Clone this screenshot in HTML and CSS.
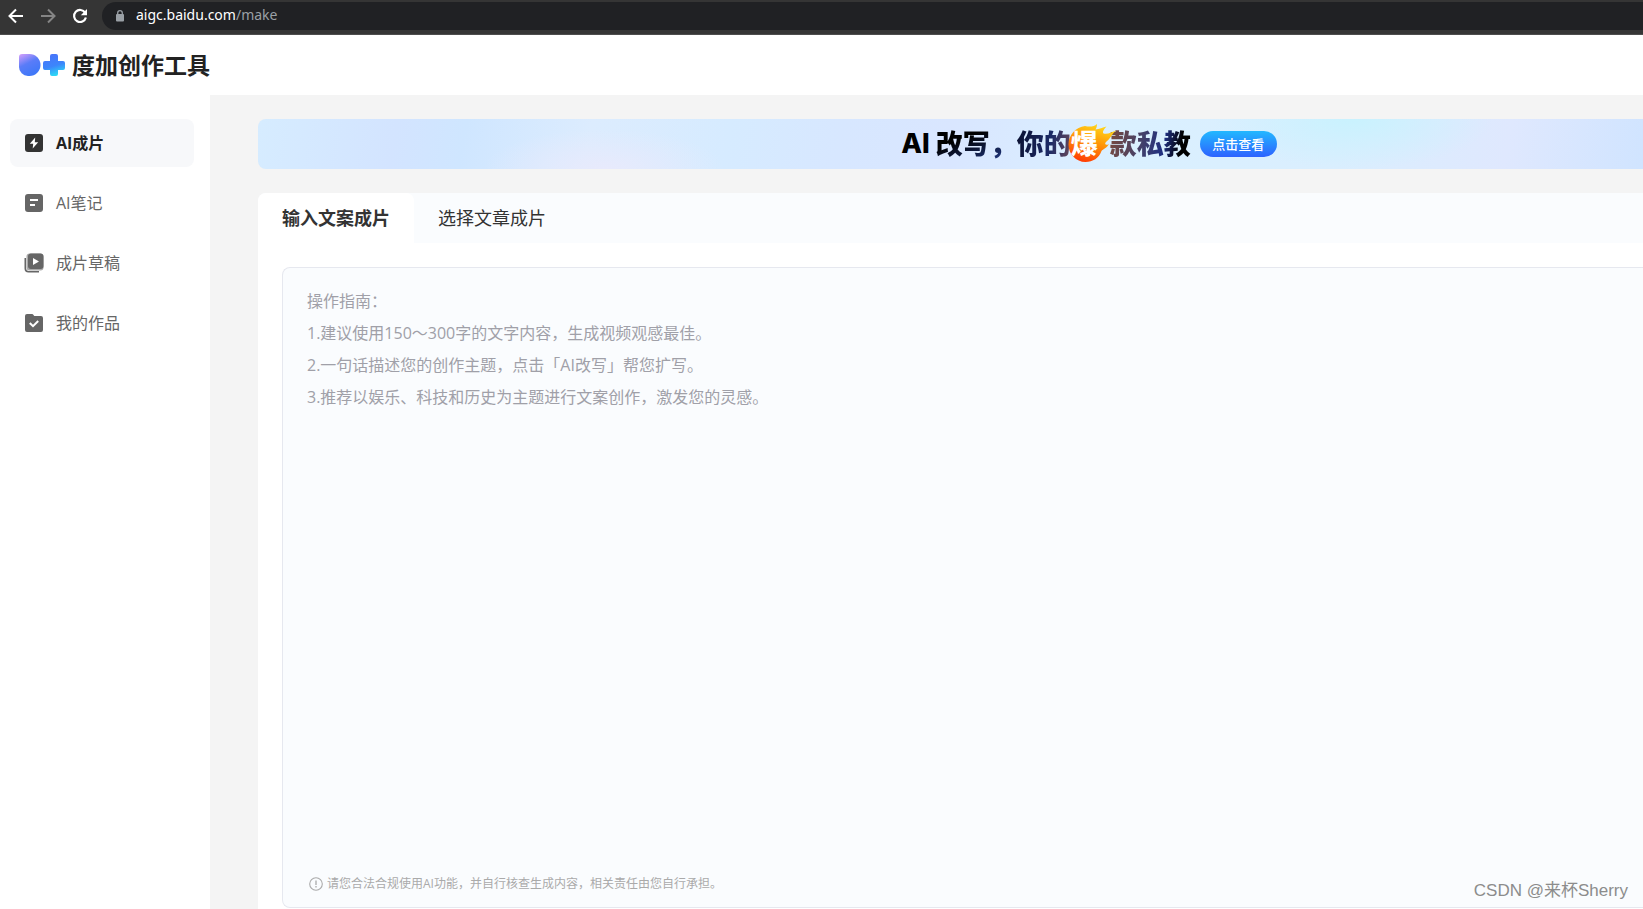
FILE: index.html
```html
<!DOCTYPE html>
<html lang="zh-CN">
<head>
<meta charset="utf-8">
<title>度加创作工具</title>
<link rel="stylesheet" href="styles.css">
</head>
<body>
<div class="browser">
  <button class="nav-btn" type="button" aria-label="后退"><svg width="16" height="16" viewBox="0 0 16 16" fill="none" stroke="#fff" stroke-width="2"><path d="M15 8H2M8 1.500L1.500 8L8 14.500"/></svg></button>
  <button class="nav-btn" type="button" aria-label="前进"><svg width="16" height="16" viewBox="0 0 16 16" fill="none" stroke="#858585" stroke-width="2"><path d="M1 8H14M8 1.500L14.500 8L8 14.500"/></svg></button>
  <button class="nav-btn" type="button" aria-label="重新加载"><svg width="16" height="16" viewBox="0 0 16 16"><path d="M13.200 4.800A6 6 0 1 0 13.900 9.500" fill="none" stroke="#fff" stroke-width="2.200"/><path d="M15 1V7.200H8.800Z" fill="#fff"/></svg></button>
  <div class="address">
    <svg width="10" height="12" viewBox="0 0 10 12"><rect x="1" y="4" width="8" height="7.500" rx="1" fill="#9aa0a6"/><path d="M2.700 5V3A2.300 2.300 0 0 1 7.300 3V5" fill="none" stroke="#9aa0a6" stroke-width="1.300"/></svg>
    <span class="url">aigc.baidu.com<span class="path">/make</span></span>
  </div>
</div>
<header class="header">
  <svg class="mark" width="48" height="24" viewBox="0 0 48 24">
    <defs>
      <linearGradient id="gd" x1="0" y1="0" x2=".5" y2="1"><stop offset="0" stop-color="#d7a0fb"/><stop offset=".5" stop-color="#5a7cf8"/><stop offset="1" stop-color="#3f78f8"/></linearGradient>
      <linearGradient id="gp" x1=".3" y1="0" x2=".6" y2="1"><stop offset="0" stop-color="#4a74fa"/><stop offset=".55" stop-color="#3c86fb"/><stop offset="1" stop-color="#2be0f5"/></linearGradient>
    </defs>
    <path d="M4 1H11.500A11 11 0 0 1 11.500 23H10A9 9 0 0 1 1 14V4A3 3 0 0 1 4 1Z" fill="url(#gd)"/>
    <path d="M34 1H38Q40 1 40 3V8H45Q47 8 47 10V15Q47 17 45 17H40V21Q40 23 38 23H34Q32 23 32 21V17H27Q25 17 25 15V10Q25 8 27 8H32V3Q32 1 34 1Z" fill="url(#gp)"/>
  </svg>
  <h1 class="brand">度加创作工具</h1>
</header>
<div class="layout">
  <nav class="sidebar">
    <a class="item active" href="#make"><svg width="20" height="20" viewBox="0 0 20 20"><rect x="1" y="1" width="18" height="18" rx="3" fill="#333"/><path d="M11.200 4.500L5.800 10.800H9.200L8.700 15.500L14.200 9.200H10.800Z" fill="#fff"/></svg>AI成片</a>
    <a class="item" href="#note"><svg width="20" height="20" viewBox="0 0 20 20"><rect x="1" y="1" width="18" height="18" rx="3" fill="#666"/><path d="M6 7H14M6 12H11" stroke="#fff" stroke-width="2"/></svg>AI笔记</a>
    <a class="item" href="#draft"><svg width="20" height="20" viewBox="0 0 20 20"><path d="M1.300 5V15.500Q1.300 18.700 4.500 18.700H15" fill="none" stroke="#666" stroke-width="1.600"/><rect x="2.500" y=".500" width="17" height="17" rx="3" fill="#aaa"/><rect x="4" y=".500" width="15.500" height="15.500" rx="3" fill="#666"/><path d="M9 5L15 8.500L9 12Z" fill="#fff"/></svg>成片草稿</a>
    <a class="item" href="#works"><svg width="20" height="20" viewBox="0 0 20 20"><path d="M3 1H8Q9 1 9.500 2L10.300 3H17Q19 3 19 5V17Q19 19 17 19H3Q1 19 1 17V3Q1 1 3 1Z" fill="#666"/><path d="M5.800 10L9 13.200L14.200 8" fill="none" stroke="#fff" stroke-width="2"/></svg>我的作品</a>
  </nav>
  <main class="main">
    <section class="banner">
      <p class="slogan"><span class="latin">AI</span><span class="ink">改写，</span><span class="ink warm-end">你的</span><span class="hot"><svg class="flame" width="48" height="40" viewBox="0 0 48 40"><defs><linearGradient id="gf" x1=".7" y1="0" x2=".3" y2="1"><stop offset="0" stop-color="#ffdc1e"/><stop offset=".45" stop-color="#ff9a08"/><stop offset="1" stop-color="#ff3c05"/></linearGradient></defs><path d="M17 2C21 3 26 3 29 0C29 2 28.500 4 27.500 5.500C31 5 35 3.500 38.500 2.500C36 5 34 8 35.500 9.500C40 10.500 44 8 48 6.500C44 10 42 15 38 18C36 20 38 22 41 20C39 24 35 25 33.500 27C31 34 25 38 17.500 38C8 38 .500 30 .500 20.500C.500 11 8 3 17 2Z" fill="url(#gf)"/></svg><span class="hot-text">爆</span></span><span class="ink warm-start">款私教</span></p>
      <button class="cta" type="button">点击查看</button>
    </section>
    <section class="card">
      <div class="tabs" role="tablist">
        <button class="tab selected" type="button" role="tab" aria-selected="true">输入文案成片</button>
        <button class="tab" type="button" role="tab" aria-selected="false">选择文章成片</button>
      </div>
      <div class="editor">
        <textarea class="input" aria-label="文案" placeholder="操作指南：
1.建议使用150～300字的文字内容，生成视频观感最佳。
2.一句话描述您的创作主题，点击「AI改写」帮您扩写。
3.推荐以娱乐、科技和历史为主题进行文案创作，激发您的灵感。"></textarea>
        <p class="notice"><svg width="14" height="14" viewBox="0 0 14 14"><circle cx="7" cy="7" r="6.300" fill="none" stroke="#aaa" stroke-width="1.100"/><path d="M7 3.500V8M7 9V10.500" stroke="#aaa" stroke-width="1.300"/></svg>请您合法合规使用AI功能，并自行核查生成内容，相关责任由您自行承担。</p>
      </div>
    </section>
  </main>
</div>
<div class="watermark">CSDN @来杯Sherry</div>
</body>
</html>
```
FILE: styles.css
```css
* { box-sizing: border-box; }
body {
  margin: 0;
  height: 100vh;
  display: flex;
  flex-direction: column;
  overflow: hidden;
  background: #fff;
  color: #333;
  font: 16px/24px "Open Sans", "Noto Sans CJK SC", sans-serif;
}
h1, p { margin: 0; }
button { border: 0; padding: 0; background: none; font: inherit; color: inherit; }
svg { display: block; flex: none; }

.browser {
  flex: none;
  display: flex;
  align-items: center;
  gap: 16px;
  height: 35px;
  padding: 0 0 3px 8px;
  background: #353535;
  border-bottom: 1px solid #4d4d4d;
}
.address {
  flex: 1;
  display: flex;
  align-items: center;
  gap: 11px;
  height: 28px;
  padding-left: 13px;
  margin-left: -2px;
  border-radius: 14px 0 0 14px;
  background: #202124;
}
.url { color: #fff; font: 14px/22px "Noto Sans", sans-serif; padding-bottom: 2px; }
.path { color: #9aa0a6; }

.header {
  flex: none;
  display: flex;
  align-items: center;
  gap: 6px;
  height: 60px;
  padding-left: 18px;
}
.brand { font-size: 23px; line-height: 32px; font-weight: 700; color: #222; }

.layout { flex: 1; display: flex; min-height: 0; }
.sidebar {
  flex: none;
  width: 210px;
  padding: 24px 16px 0 10px;
  display: flex;
  flex-direction: column;
  gap: 12px;
}
.item {
  display: flex;
  align-items: center;
  gap: 12px;
  height: 48px;
  padding-left: 14px;
  border-radius: 8px;
  color: #666;
  text-decoration: none;
}
.active { background: #f7f8fa; color: #222; font-weight: 700; }

.main {
  flex: 1;
  min-width: 0;
  display: flex;
  flex-direction: column;
  gap: 24px;
  padding: 24px 0 0 48px;
  background: #f4f4f4;
}
.banner {
  flex: none;
  display: flex;
  align-items: center;
  justify-content: center;
  gap: 9px;
  height: 50px;
  padding-left: 20%;
  border-radius: 8px 0 0 8px;
  background:
    radial-gradient(ellipse 120px 40px at 25% 100%, #e8eafc, transparent),
    radial-gradient(ellipse 140px 50px at 79% 0, #c9f2fe, transparent),
    linear-gradient(100deg, #d6ecff 0, #d3e4ff 10%, #cfe6ff 15%, #dcecfe 24%, #d6ebff 34%, #d7e7ff 42%, #d9e6ff 50%, #daf0ff 62%, #daeefe 78%, #dfe8fe 90%, #d0e4ff 100%);
}
.slogan { display: flex; font-size: 27px; line-height: 40px; font-weight: 900; }
.latin { margin-right: 6px; color: #000; font-family: Inter, sans-serif; font-weight: 800; }
.ink {
  color: transparent;
  background: linear-gradient(160deg, #000 35%, #223a8c 90%);
  background-clip: text;
  -webkit-background-clip: text;
}
.warm-end { background-image: linear-gradient(100deg, #0a1030, #1c2a66 60%, #6b4a58); }
.warm-start { background-image: linear-gradient(100deg, #7a4a3c, #43406a 40%, #1f2f80 65%, #000 85%); }
.hot { position: relative; width: 42px; margin-left: -3px; padding-left: 3px; color: #fff; }
.flame { position: absolute; left: 0; top: 0; }
.hot-text { position: relative; }
.cta {
  width: 77px;
  height: 26px;
  border-radius: 13px;
  background: linear-gradient(#22b8ff, #2d62ff);
  color: #fff;
  font-size: 13px;
  font-weight: 500;
  line-height: 26px;
}

.card {
  flex: 1;
  min-height: 0;
  display: flex;
  flex-direction: column;
  border-radius: 8px 0 0 0;
  overflow: hidden;
  background: #fff;
}
.tabs { flex: none; display: flex; height: 50px; background: #fafcfe; }
.tab { padding: 0 24px; font-size: 18px; color: #333; }
.selected { background: #fff; font-weight: 700; border-radius: 8px 8px 0 0; }
.editor {
  flex: 1;
  min-height: 0;
  display: flex;
  flex-direction: column;
  margin: 24px 0 1px 24px;
  border: 1px solid #e6e8ef;
  border-right: 0;
  border-radius: 8px 0 0 8px;
  background: #fafcfe;
}
.input {
  flex: 1;
  width: 100%;
  padding: 17px 24px;
  border: 0;
  outline: 0;
  resize: none;
  background: none;
  font: 16px/32px "Open Sans", "Noto Sans CJK SC", sans-serif;
}
.input::placeholder { color: #a0a0a8; opacity: 1; }
.notice {
  display: flex;
  align-items: center;
  gap: 4px;
  padding: 0 26px 13px;
  font-size: 12px;
  line-height: 20px;
  color: #aaa;
}
.watermark {
  position: absolute;
  right: 15px;
  bottom: 6px;
  font: 17px/24px "Liberation Sans", "Noto Sans CJK SC", sans-serif;
  color: #8c8c8c;
}
```
